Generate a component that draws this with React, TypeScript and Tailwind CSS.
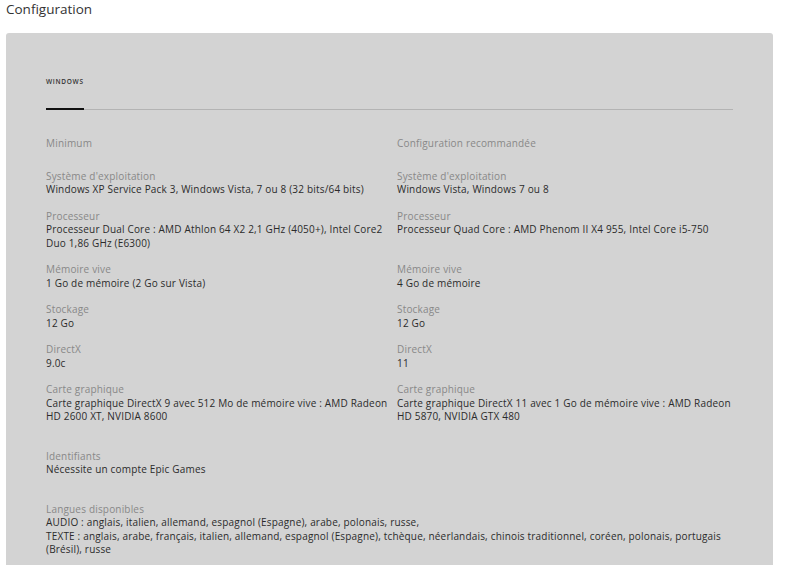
export default function App() {
  const rows: [string, string, string][] = [
    ["Système d'exploitation", "Windows XP Service Pack 3, Windows Vista, 7 ou 8 (32 bits/64 bits)", "Windows Vista, Windows 7 ou 8"],
    ["Processeur", "Processeur Dual Core : AMD Athlon 64 X2 2,1 GHz (4050+), Intel Core2 Duo 1,86 GHz (E6300)", "Processeur Quad Core : AMD Phenom II X4 955, Intel Core i5-750"],
    ["Mémoire vive", "1 Go de mémoire (2 Go sur Vista)", "4 Go de mémoire"],
    ["Stockage", "12 Go", "12 Go"],
    ["DirectX", "9.0c", "11"],
    ["Carte graphique", "Carte graphique DirectX 9 avec 512 Mo de mémoire vive : AMD Radeon HD 2600 XT, NVIDIA 8600", "Carte graphique DirectX 11 avec 1 Go de mémoire vive : AMD Radeon HD 5870, NVIDIA GTX 480"],
  ];

  return (
    <div className="min-h-screen bg-white font-['Open_Sans',sans-serif] text-[#2b2b2b]">
      <h1 className="pl-[6px] pt-[1px] text-[13.5px] leading-[16px] font-normal text-[#333]">Configuration</h1>

      <div className="mt-[16px] ml-[6px] mr-[19px] rounded-[3px] bg-[#d3d3d3] px-[40px] pt-[45px] pb-[40px]">
        {/* Platform tabs */}
        <div className="flex border-b border-[#b3b3b3]">
          <div className="-mb-px border-b-2 border-[#111] pb-[22px] text-[6.5px] leading-[8px] font-semibold tracking-[0.7px] text-[#333]">
            WINDOWS
          </div>
        </div>

        <div className="mt-[27px] text-[10px] leading-[13.5px] tracking-[0.18px]">
          <div className="grid grid-cols-[342px_1fr] gap-x-[9px] gap-y-[13px]">
            <div className="mb-[6px] text-[#888]">Minimum</div>
            <div className="mb-[6px] text-[#888]">Configuration recommandée</div>
            {rows.map(([label, min, rec]) => (
              <>
                <div key={label + "-min"}>
                  <div className="text-[#888]">{label}</div>
                  <div>{min}</div>
                </div>
                <div key={label + "-rec"}>
                  <div className="text-[#888]">{label}</div>
                  <div>{rec}</div>
                </div>
              </>
            ))}
          </div>

          <div className="mt-[26px]">
            <div className="text-[#888]">Identifiants</div>
            <div>Nécessite un compte Epic Games</div>
          </div>

          <div className="mt-[26px]">
            <div className="text-[#888]">Langues disponibles</div>
            <div>AUDIO : anglais, italien, allemand, espagnol (Espagne), arabe, polonais, russe,</div>
            <div>
              TEXTE : anglais, arabe, français, italien, allemand, espagnol (Espagne), tchèque, néerlandais, chinois traditionnel, coréen, polonais, portugais (Brésil), russe
            </div>
          </div>
        </div>
      </div>
    </div>
  );
}
